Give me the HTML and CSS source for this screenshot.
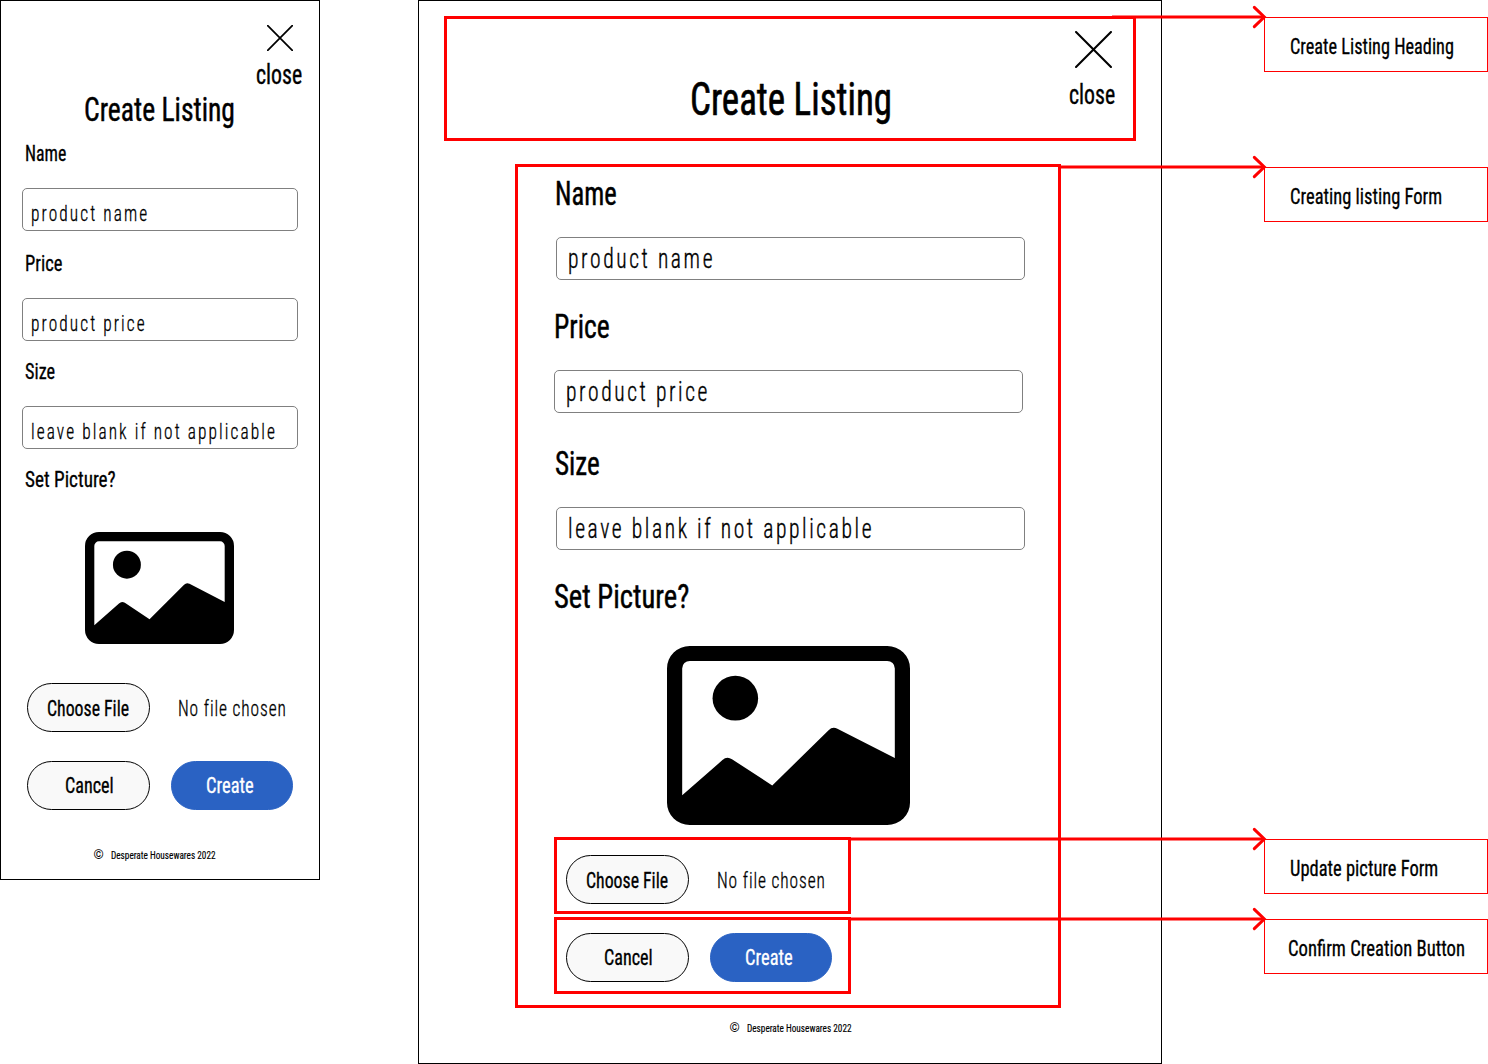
FILE: index.html
```html
<!DOCTYPE html>
<html lang="en">
<head>
<meta charset="utf-8">
<title>Create Listing – wireframes</title>
<link rel="stylesheet" href="styles.css">
</head>
<body>
<svg class="symbols" width="0" height="0">
  <symbol id="cross" viewBox="0 0 36 36" preserveAspectRatio="none"><path d="M1 1 35 35M35 1 1 35" fill="none" stroke="#000" stroke-linecap="round"/></symbol>
  <symbol id="picture" viewBox="0 0 16 12" preserveAspectRatio="none">
    <path fill-rule="evenodd" d="M1.5 0h13A1.5 1.5 0 0 1 16 1.5v9a1.5 1.5 0 0 1-1.5 1.5h-13A1.5 1.5 0 0 1 0 10.500v-9A1.5 1.5 0 0 1 1.500 0ZM1 10 3.650 7.650a.5.5 0 0 1 .63-.06L6.930 9.350 10.640 5.650a.5.5 0 0 1 .58-.1L15 7.500v-6a.5.5 0 0 0-.5-.5h-13a.5.5 0 0 0-.5.5Z"/>
    <circle cx="4.500" cy="3.500" r="1.500"/>
  </symbol>
</svg>

<main class="board">
  <section class="frame mobile">
    <button class="close"><svg class="cross"><use href="#cross"/></svg><span class="t close-text">close</span></button>
    <h1 class="title"><span class="t">Create Listing</span></h1>
    <form>
      <div class="field"><label class="label"><span class="t k-name">Name</span></label><div class="input"><span class="t">product name</span></div></div>
      <div class="field"><label class="label"><span class="t k-price">Price</span></label><div class="input"><span class="t">product price</span></div></div>
      <div class="field"><label class="label"><span class="t k-size">Size</span></label><div class="input"><span class="t">leave blank if not applicable</span></div></div>
      <div class="label"><span class="t k-set">Set Picture?</span></div>
      <svg class="picture"><use href="#picture"/></svg>
      <div class="row file-row"><div class="btn choose"><span class="t">Choose File</span></div><span class="t no-file">No file chosen</span></div>
      <div class="row"><div class="btn cancel"><span class="t">Cancel</span></div><div class="btn create"><span class="t">Create</span></div></div>
    </form>
    <footer class="footer"><span class="copy">©</span><span class="t">Desperate Housewares 2022</span></footer>
  </section>

  <section class="frame desktop">
    <header class="outline head">
      <h1 class="title"><span class="t">Create Listing</span></h1>
      <button class="close"><svg class="cross"><use href="#cross"/></svg><span class="t close-text">close</span></button>
    </header>
    <form class="outline form">
      <div class="field"><label class="label"><span class="t k-name">Name</span></label><div class="input"><span class="t">product name</span></div></div>
      <div class="field price"><label class="label"><span class="t k-price">Price</span></label><div class="input"><span class="t">product price</span></div></div>
      <div class="field"><label class="label"><span class="t k-size">Size</span></label><div class="input"><span class="t">leave blank if not applicable</span></div></div>
      <div class="label set"><span class="t k-set">Set Picture?</span></div>
      <svg class="picture"><use href="#picture"/></svg>
      <div class="outline group file-row"><div class="btn choose"><span class="t">Choose File</span></div><span class="t no-file">No file chosen</span></div>
      <div class="outline group actions"><div class="btn cancel"><span class="t">Cancel</span></div><div class="btn create"><span class="t">Create</span></div></div>
    </form>
    <footer class="footer"><span class="copy">©</span><span class="t">Desperate Housewares 2022</span></footer>
  </section>

  <aside class="notes">
    <div class="note"><span class="t">Create Listing Heading</span></div>
    <div class="note note-form"><span class="t">Creating listing Form</span></div>
    <div class="note note-picture"><span class="t">Update picture Form</span></div>
    <div class="note note-confirm"><span class="t">Confirm Creation Button</span></div>
  </aside>
</main>

<svg class="arrows" width="1488" height="1064" viewBox="0 0 1488 1064">
  <path d="M1112 17H1264"/><path class="tip" d="M1254.300 7.300 1264.300 17 1254.300 26.700"/>
  <path d="M1061 167H1264"/><path class="tip" d="M1254.300 157.300 1264.300 167 1254.300 176.700"/>
  <path d="M851 839H1264"/><path class="tip" d="M1254.300 829.300 1264.300 839 1254.300 848.700"/>
  <path d="M851 919H1264"/><path class="tip" d="M1254.300 909.300 1264.300 919 1254.300 928.700"/>
</svg>
</body>
</html>
```
FILE: styles.css
```css
* { box-sizing: border-box; }
body { margin: 0; background: #fff; color: #000; font-family: Roboto, "Liberation Sans", sans-serif; font-stretch: 75%; font-size: 22.8px; }
h1, button { margin: 0; padding: 0; border: 0; background: none; color: inherit; font: inherit; font-weight: 400; }
svg { display: block; }
.symbols { position: absolute; }
.board { display: flex; align-items: flex-start; width: 1488px; height: 1064px; overflow: hidden; }

/* condensed lettering */
.t { display: block; width: max-content; white-space: nowrap; transform: scaleX(var(--k, .812)); transform-origin: 0 50%; -webkit-text-stroke: .014em currentColor; }
.k-name { --k: .782; }
.k-price { --k: .812; }
.k-size { --k: .8; }
.k-set { --k: .842; }

.frame { border: 1px solid #000; flex: none; }
.mobile { width: 320px; height: 880px; }
.desktop { width: 744px; height: 1064px; margin-left: 98px; }
.outline { border: 3px solid #f00; }

.close { display: block; text-align: left; font-size: 27.3px; line-height: 28px; }
.close-text { --k: .798; }
.cross { stroke-width: 2; overflow: visible; }
.title { line-height: 40px; font-size: 34px; }
.label { display: block; line-height: 24px; }
.input { height: 43px; border: 1px solid #808080; border-radius: 5px; font-weight: 300; letter-spacing: .12em; line-height: 41px; }
.input .t { --k: .76; }

.row { display: flex; align-items: flex-start; height: 49px; }
.btn { width: 123px; height: 49px; border: 1px solid #000; border-radius: 24.5px; background: #f9f9f9; line-height: 47px; flex: none; }
.choose { padding: 1px 0 0 18.5px; }
.choose .t { --k: .78; }
.cancel { padding-left: 36.5px; }
.cancel .t { --k: .795; }
.create { width: 122px; margin-left: 21px; padding-left: 33.6px; border-color: #2a62c3; background: #2a62c3; color: #fff; }
.no-file { --k: .763; font-weight: 300; letter-spacing: .05em; line-height: 52px; margin-left: 28px; }
.footer { display: flex; align-items: center; height: 16px; font-size: 11.4px; line-height: 16px; }
.copy { width: 17.500px; font-size: 13px; font-stretch: 100%; }

/* mobile frame */
.mobile .close { margin: 24px 0 0 255px; }
.mobile .cross { width: 26px; height: 26px; margin: 0 0 10px 11px; stroke-width: 2.4; }
.mobile .title { margin-left: 82.700px; }
.mobile form { margin: 13px 0 0 21px; }
.mobile .label { margin-left: 2.500px; }
.mobile .field { margin-bottom: 19px; }
.mobile .field:first-child { margin-bottom: 21px; }
.mobile .input { width: 276px; margin-top: 22px; padding: 4px 0 0 8px; }
.mobile .picture { width: 149px; height: 112px; margin: 40.300px 0 38.700px 63px; }
.mobile .row { margin-left: 5px; }
.mobile .file-row { margin-bottom: 29px; }
.mobile .footer { margin: 37px 0 0 92.500px; }

/* desktop frame */
.head { display: flex; align-items: flex-start; width: 692px; height: 125px; margin: 15px 0 0 25px; }
.desktop .title { width: 379px; margin: 53px 0 0 242.600px; font-size: 45.500px; line-height: 56px; }
.desktop .close { margin-top: 12px; }
.desktop .cross { width: 37px; height: 37px; margin: 0 0 13px 6px; }
.form { width: 546px; height: 844px; margin: 23px 0 0 96px; padding: 7px 0 0 38px; }
.desktop .label { font-size: 34px; line-height: 39px; height: 40px; margin-left: -1px; }
.desktop .field { margin-bottom: 27px; }
.desktop .price { margin: 0 0 31px -2px; }
.desktop .price .label { margin-left: 0; }
.desktop .set { margin-left: -2px; }
.desktop .input { width: 469px; margin-top: 23px; padding: 1px 0 0 11px; font-size: 27.300px; }
.desktop .input .t { --k: .79; }
.desktop .picture { width: 243px; height: 179px; margin: 29.300px 0 11.700px 111px; }
.group { display: flex; align-items: flex-start; width: 297px; height: 77px; margin-left: -2px; padding: 15px 0 0 9px; }
.actions { margin-top: 3px; padding-top: 13px; }
.desktop .footer { margin: 12px 0 0 310.500px; }

/* annotations */
.notes { width: 224px; margin-left: 102px; padding-top: 17px; }
.note { height: 55px; border: 1px solid #f00; padding-left: 24.500px; line-height: 57px; }
.note-form { margin-top: 95px; }
.note-picture { margin-top: 617px; }
.note-confirm { --k: .819; margin-top: 25px; padding-left: 22.700px; }
.note:first-child { --k: .802; }
.arrows { position: absolute; left: 0; top: 0; fill: none; stroke: #f00; stroke-width: 3; pointer-events: none; }
.tip { stroke-linecap: round; }
```
